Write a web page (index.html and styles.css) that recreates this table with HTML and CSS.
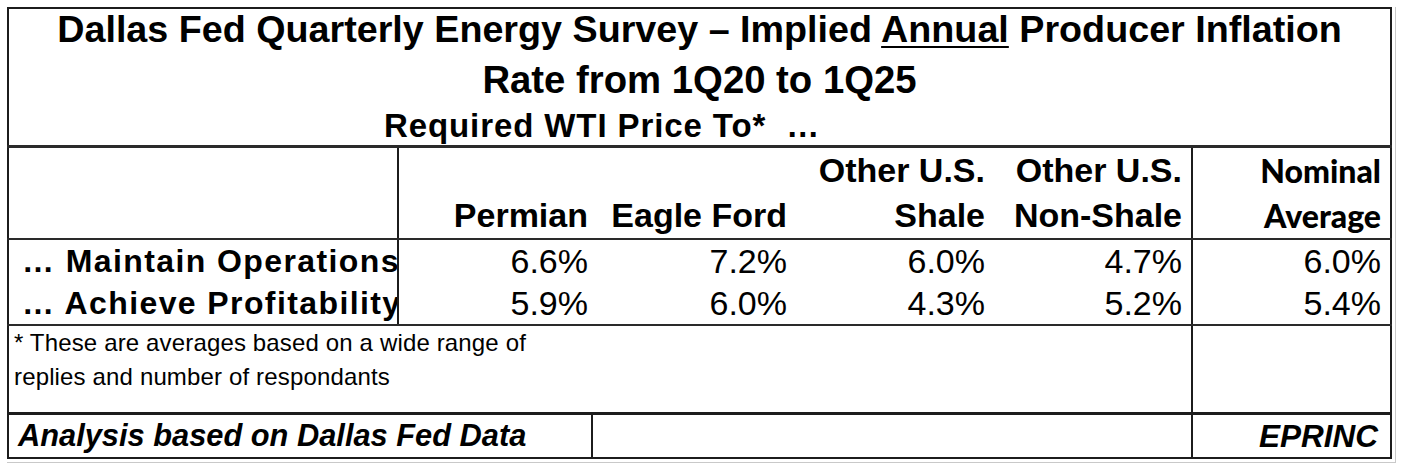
FILE: index.html
```html
<!DOCTYPE html>
<html lang="en">
<head>
<meta charset="utf-8">
<title>Dallas Fed Quarterly Energy Survey – Implied Annual Producer Inflation</title>
<link rel="stylesheet" href="styles.css">
</head>
<body>
<div class="frame">
  <table class="survey">
    <colgroup>
      <col class="c-label">
      <col class="c-perm">
      <col class="c-eagle">
      <col class="c-shale">
      <col class="c-non">
      <col class="c-nom">
    </colgroup>
    <tr class="row-title">
      <td colspan="6" class="title">
        <div class="t1">Dallas Fed Quarterly Energy Survey – Implied <u>Annual</u> Producer Inflation</div>
        <div class="t2">Rate from 1Q20 to 1Q25</div>
        <div class="t3">Required WTI Price To*&nbsp; …</div>
      </td>
    </tr>
    <tr class="row-head">
      <th class="lbl"></th>
      <th class="hd p4"><span class="l">&nbsp;</span><span class="l">Permian</span></th>
      <th class="hd p3"><span class="l">&nbsp;</span><span class="l">Eagle Ford</span></th>
      <th class="hd p3"><span class="l">Other U.S.</span><span class="l">Shale</span></th>
      <th class="hd p9"><span class="l">Other U.S.</span><span class="l">Non-Shale</span></th>
      <th class="hd nom p9 cal"><span class="l">Nominal</span><span class="l">Average</span></th>
    </tr>
    <tr class="row-d1">
      <td class="lbl">… Maintain Operations</td>
      <td class="num p4">6.6%</td>
      <td class="num p3">7.2%</td>
      <td class="num p3">6.0%</td>
      <td class="num p9">4.7%</td>
      <td class="num nom p9">6.0%</td>
    </tr>
    <tr class="row-d2">
      <td class="lbl">… Achieve Profitability</td>
      <td class="num p4">5.9%</td>
      <td class="num p3">6.0%</td>
      <td class="num p3">4.3%</td>
      <td class="num p9">5.2%</td>
      <td class="num nom p9">5.4%</td>
    </tr>
    <tr class="row-note">
      <td colspan="5" class="note">* These are averages based on a wide range of<br>replies and number of respondants</td>
      <td class="nom"></td>
    </tr>
    <tr class="row-foot">
      <td colspan="2" class="src">Analysis based on Dallas Fed Data</td>
      <td colspan="3"></td>
      <td class="nom brand">EPRINC</td>
    </tr>
  </table>
</div>
</body>
</html>
```
FILE: styles.css
```css
html, body {
  margin: 0;
  padding: 0;
  background: #ffffff;
}

body {
  font-family: "Liberation Sans", Arial, sans-serif;
  color: #000;
}

.frame {
  margin: 7px 0 0 7px;
  width: 1385px;
  padding: 0 3px 3px 0;
  border-right: 1px solid #c9c9c9;
  border-bottom: 1px solid #c9c9c9;
}

.survey {
  border-collapse: collapse;
  table-layout: fixed;
  width: 1385px;
  border: 2px solid #1c1c1c;
}

.c-label { width: 390px; }
.c-perm  { width: 194px; }
.c-eagle { width: 198px; }
.c-shale { width: 198px; }
.c-non   { width: 204px; }
.c-nom   { width: 199px; }

.survey td,
.survey th {
  padding: 0;
  vertical-align: top;
}

/* title block */
.title {
  text-align: center;
  font-weight: bold;
  border-bottom: 3px solid #2a2a2a;
}
.t1 {
  font-size: 37.7px;
  line-height: 40px;
  white-space: nowrap;
}
.t1 u {
  text-decoration-thickness: 2px;
  text-underline-offset: 4px;
}
.t2 {
  font-size: 38.3px;
  line-height: 42px;
  margin-top: 10px;
}
.t3 {
  font-size: 33px;
  line-height: 38px;
  letter-spacing: 0.9px;
  text-align: left;
  padding-left: 375px;
  margin-top: 6px;
  white-space: nowrap;
}

/* header row */
.row-head th {
  font-weight: bold;
  font-size: 34px;
  text-align: right;
  height: 90px;
  border-bottom: 2px solid #2a2a2a;
}
.hd .l {
  display: block;
  line-height: 45px;
  white-space: nowrap;
}
.row-head th.cal {
  font-family: Lato, "Open Sans", sans-serif;
  font-size: 32px;
  font-weight: 900;
}

.lbl {
  border-right: 2px solid #1c1c1c;
}
.nom {
  border-left: 2px solid #1c1c1c;
}

.p3 { padding-right: 3px !important; }
.p4 { padding-right: 4px !important; }
.p9 { padding-right: 9px !important; }

/* data rows */
.row-d1 td,
.row-d2 td {
  white-space: nowrap;
  overflow: hidden;
}
.row-d1 td { height: 43px; line-height: 43px; }
.row-d2 td {
  height: 41px;
  line-height: 41px;
  border-bottom: 2px solid #2a2a2a;
}
td.lbl {
  font-weight: bold;
  font-size: 32px;
  letter-spacing: 1.4px;
  padding-left: 13px;
  text-overflow: clip;
}
.num {
  text-align: right;
  font-size: 34px;
}

/* footnote row */
.row-note td {
  height: 86px;
  border-bottom: 3px solid #1c1c1c;
}
.note {
  font-size: 24px;
  letter-spacing: 0.15px;
  line-height: 34px;
  padding-left: 5px !important;
}

/* footer row */
.row-foot td {
  height: 42px;
  line-height: 42px;
  font-weight: bold;
  font-style: italic;
}
.src {
  font-size: 30.8px;
  padding-left: 9px !important;
  border-right: 2px solid #1c1c1c;
  white-space: nowrap;
}
.brand {
  font-size: 31.5px;
  text-align: right;
  padding-right: 12px !important;
}
```
